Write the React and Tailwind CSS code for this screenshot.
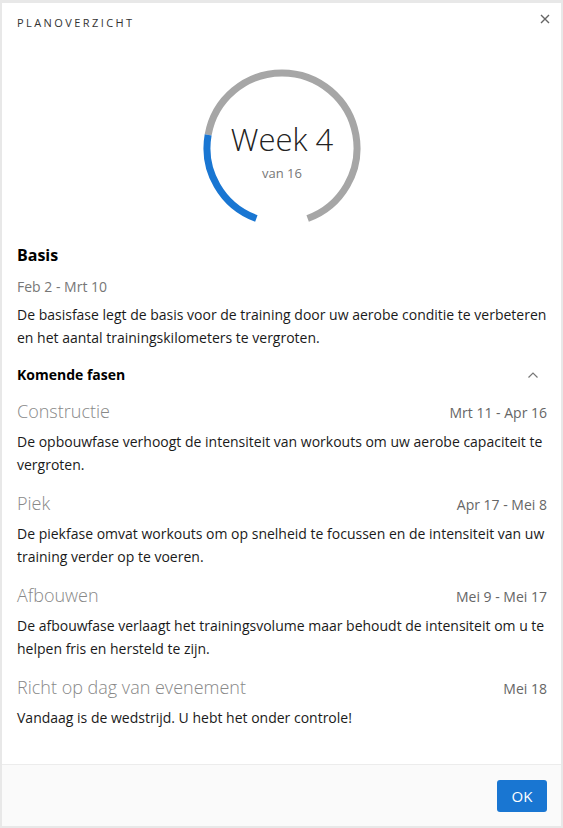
import React from "react";

const phases = [
  {
    name: "Constructie",
    dates: "Mrt 11 - Apr 16",
    text: "De opbouwfase verhoogt de intensiteit van workouts om uw aerobe capaciteit te vergroten.",
  },
  {
    name: "Piek",
    dates: "Apr 17 - Mei 8",
    text: "De piekfase omvat workouts om op snelheid te focussen en de intensiteit van uw training verder op te voeren.",
  },
  {
    name: "Afbouwen",
    dates: "Mei 9 - Mei 17",
    text: "De afbouwfase verlaagt het trainingsvolume maar behoudt de intensiteit om u te helpen fris en hersteld te zijn.",
  },
  {
    name: "Richt op dag van evenement",
    dates: "Mei 18",
    text: "Vandaag is de wedstrijd. U hebt het onder controle!",
  },
];

function Ring() {
  return (
    <div className="relative mx-auto h-[160px] w-[160px]">
      <svg width="160" height="160" viewBox="0 0 160 160" fill="none">
        <path d="M 6.14 66.98 A 75 75 0 1 1 105.65 150.48" stroke="#a6a6a6" strokeWidth="7" />
        <path d="M 54.35 150.48 A 75 75 0 0 1 6.14 66.98" stroke="#1976d2" strokeWidth="7" />
      </svg>
      <div className="absolute inset-0 flex flex-col items-center justify-center">
        <div className="mt-[4px] text-[31px] font-light leading-[40px] text-[#222]">Week 4</div>
        <div className="mt-[5px] text-[13px] leading-[18px] text-[#777]">van 16</div>
      </div>
    </div>
  );
}

export default function App() {
  return (
    <div
      className="h-screen bg-[#e8e8e8] pt-[3px] pb-[2px] px-[2px]"
      style={{ fontFamily: '"Open Sans", "Liberation Sans", sans-serif' }}
    >
      <div className="flex h-full flex-col bg-white">
        <div className="flex items-start justify-between px-[15px] pt-[12px]">
          <div className="text-[11px] leading-[16px] tracking-[0.22em] text-[#333]">PLANOVERZICHT</div>
          <button className="-mt-[2px] -mr-[5px] text-[#666]">
            <svg width="12" height="12" viewBox="0 0 12 12" fill="none" stroke="currentColor" strokeWidth="1.4">
              <path d="M2 2 L10 10 M10 2 L2 10" />
            </svg>
          </button>
        </div>

        <div className="flex-1 overflow-hidden pl-[15px] pr-[14px]">
          <div className="mt-[37px]">
            <Ring />
          </div>

          <div className="mt-[15px] text-[16px] font-bold leading-[24px] text-black">Basis</div>
          <div className="mt-[10px] text-[14px] leading-[20px] text-[#777]">Feb 2 - Mrt 10</div>
          <p className="-mr-[6px] mt-[6px] text-[14px] leading-[23px] text-[#1a1a1a]">
            De basisfase legt de basis voor de training door uw aerobe conditie te verbeteren en het aantal trainingskilometers te vergroten.
          </p>

          <div className="mt-[16px] flex items-center justify-between">
            <div className="text-[14px] font-bold leading-[20px] text-black">Komende fasen</div>
            <svg className="mr-[8px]" width="12" height="8" viewBox="0 0 12 8" fill="none" stroke="#777" strokeWidth="1.2">
              <path d="M1.5 6.5 L6 2 L10.5 6.5" />
            </svg>
          </div>

          <div className="mt-[13px] flex flex-col gap-[14px]">
            {phases.map((p) => (
              <div key={p.name}>
                <div className="flex items-baseline justify-between">
                  <div className="text-[18px] font-light leading-[26px] text-[#888]">{p.name}</div>
                  <div className="text-[14px] leading-[18px] text-[#666]">{p.dates}</div>
                </div>
                <p className="mt-[6px] text-[14px] leading-[23px] text-[#1a1a1a]">{p.text}</p>
              </div>
            ))}
          </div>
        </div>

        <div className="flex h-[62px] justify-end border-t border-[#ececec] bg-[#fafafa] px-[14px] pt-[15px]">
          <button className="h-[32px] w-[50px] rounded-[3px] bg-[#1976d2] text-[15px] text-white">OK</button>
        </div>
      </div>
    </div>
  );
}
